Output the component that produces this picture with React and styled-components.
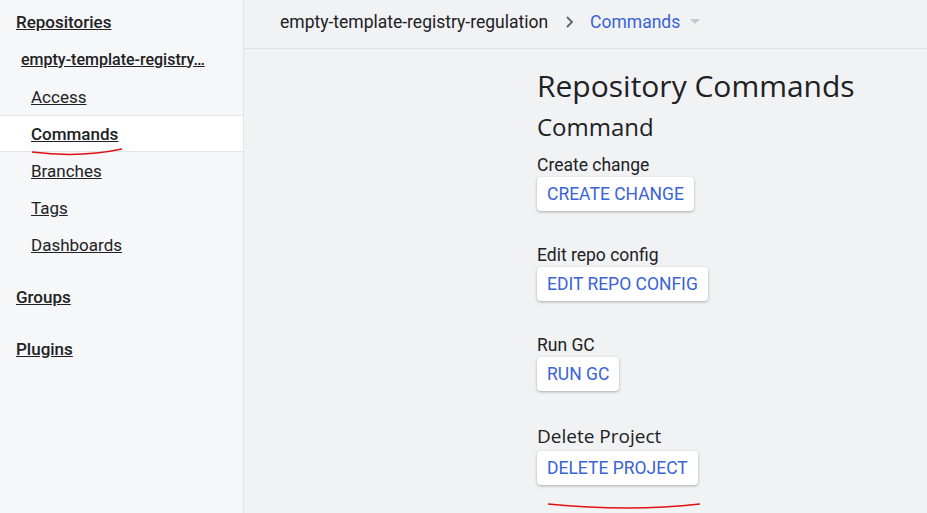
import React from "react";
import styled, { createGlobalStyle } from "styled-components";

const Global = createGlobalStyle`
  html, body { margin: 0; padding: 0; background: #f1f2f4; font-family: Roboto, "Liberation Sans", sans-serif; color: #202124; }
  #root { height: 513px; overflow: hidden; }
`;

const Shell = styled.div`display: flex; height: 513px; position: relative;`;
const Side = styled.nav`
  width: 244px; flex: none; background: #f6f7f8; border-right: 1px solid #e0e2e5;
  padding-top: 10px; box-sizing: border-box; display: flex; flex-direction: column;
`;
const SideLink = styled.a`
  box-sizing: border-box;
  display: flex; align-items: center; height: ${p => p.$h || 37}px; flex: none;
  padding-left: ${p => p.$indent}px; color: #202124; text-decoration: underline;
  font-size: ${p => p.$size || 17}px; font-weight: ${p => p.$weight || 400};
  background: ${p => (p.$active ? "#fff" : "transparent")};
  border-top: ${p => (p.$active ? "1px solid #e3e5e8" : "1px solid transparent")};
  border-bottom: ${p => (p.$active ? "1px solid #e3e5e8" : "1px solid transparent")};
  margin-top: ${p => p.$mt || 0}px; white-space: nowrap;
`;
const Main = styled.main`flex: 1; display: flex; flex-direction: column;`;
const Top = styled.header`
  height: 57px; border-bottom: 1px solid #dfe1e4; display: flex; align-items: flex-start;
  padding: 10px 0 0 36px; gap: 16px; font-size: 17.5px; box-sizing: border-box; line-height: 24px;
`;
const Crumb = styled.span`color: ${p => p.$c || "#202124"};`;
const Content = styled.section`padding: 17px 0 0 293px; display: flex; flex-direction: column;`;
const H1 = styled.h1`margin: 0; font-family: "Open Sans", sans-serif; font-weight: 400; font-size: 30px; line-height: 40px;`;
const H2 = styled.h2`margin: 2px 0 7px; font-family: "Open Sans", sans-serif; font-weight: 400; font-size: 24px; line-height: 38px;`;
const Group = styled.div`display: flex; flex-direction: column; align-items: flex-start; height: 90px;`;
const Label = styled.div`
  font-size: ${p => p.$big ? 19 : 17.5}px; line-height: 24px;
  font-family: ${p => p.$big ? '"Open Sans", sans-serif' : 'Roboto, sans-serif'};
  margin: ${p => p.$big ? "1px 0 3px" : "0"};
`;
const Btn = styled.button`
  height: 34px; padding: 0 10px; border: none; border-radius: 4px; background: #fff;
  color: #3a63d6; font-family: Roboto, sans-serif; font-size: 17.5px;
  box-shadow: 0 1px 3px rgba(0,0,0,0.3);
`;
const Mark = styled.svg`position: absolute; left: 0; top: 0; pointer-events: none;`;

const cmds = [
  ["Create change", "CREATE CHANGE"],
  ["Edit repo config", "EDIT REPO CONFIG"],
  ["Run GC", "RUN GC"],
  ["Delete Project", "DELETE PROJECT", true],
];

export default function App() {
  return (
    <Shell>
      <Global />
      <Side>
        <SideLink $indent={16} $weight={500} $h={24}>Repositories</SideLink>
        <SideLink $indent={21} $weight={500} $size={16} $h={38} $mt={6}>empty-template-registry…</SideLink>
        <SideLink $indent={31}>Access</SideLink>
        <SideLink $indent={31} $active $weight={500}>Commands</SideLink>
        <SideLink $indent={31}>Branches</SideLink>
        <SideLink $indent={31}>Tags</SideLink>
        <SideLink $indent={31}>Dashboards</SideLink>
        <SideLink $indent={16} $weight={500} $mt={15}>Groups</SideLink>
        <SideLink $indent={16} $weight={500} $mt={15}>Plugins</SideLink>
      </Side>
      <Main>
        <Top>
          <Crumb>empty-template-registry-regulation</Crumb>
          <svg width="10" height="24" viewBox="0 0 10 24"><path d="M3 7l5 5-5 5" stroke="#5f6368" strokeWidth="1.8" fill="none" /></svg>
          <Crumb $c="#3a63d6">Commands</Crumb>
          <svg width="10" height="24" viewBox="0 0 10 24" style={{ marginLeft: -6 }}><path d="M0 9h10L5 14z" fill="#c4c7cc" /></svg>
        </Top>
        <Content>
          <H1>Repository Commands</H1>
          <H2>Command</H2>
          {cmds.map(([l, b, big]) => (
            <Group key={l}>
              <Label $big={big}>{l}</Label>
              <Btn>{b}</Btn>
            </Group>
          ))}
        </Content>
      </Main>
      <Mark width="927" height="513">
        <path d="M32 152 Q80 158 122 149" stroke="#e01010" strokeWidth="1.5" fill="none" />
        <path d="M548 504 Q630 512 700 504" stroke="#e01010" strokeWidth="1.5" fill="none" />
      </Mark>
    </Shell>
  );
}
